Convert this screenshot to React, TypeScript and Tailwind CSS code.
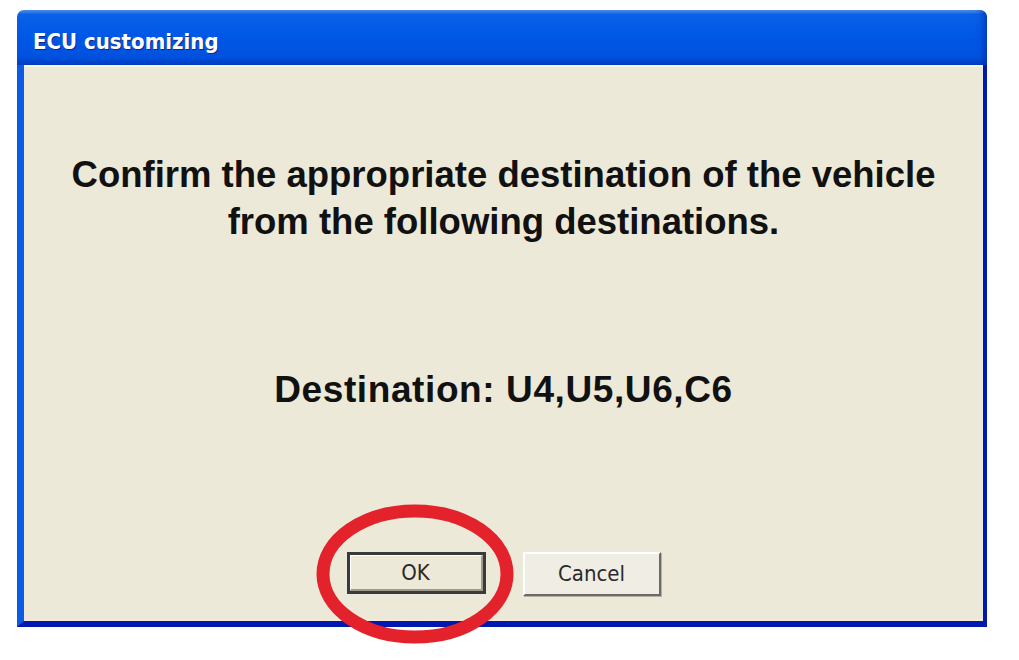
import * as React from 'react';

const titleFont = { fontFamily: '"DejaVu Sans Condensed", "DejaVu Sans", sans-serif' };
const bodyFont = { fontFamily: '"Liberation Sans", Arial, sans-serif' };

function XpButton({ label, isDefault }: { label: string; isDefault?: boolean }) {
  if (isDefault) {
    return (
      <div className="w-[139px] h-[42px] border-[3px] border-[#3a3a3a] bg-[#ece9d8]">
        <div className="h-full flex items-center justify-center border-t border-l border-t-white border-l-white border-b-2 border-r-2 border-b-[#9d9a8e] border-r-[#9d9a8e]">
          <span className="text-[22px] text-[#2a2a2a] leading-none" style={titleFont}>
            {label}
          </span>
        </div>
      </div>
    );
  }
  return (
    <div className="w-[138px] h-[44px] flex items-center justify-center bg-[#f0eee4] border-2 border-t-white border-l-white border-b-[#6b6a65] border-r-[#6b6a65] shadow-[1px_1px_0_#b5b2a5]">
      <span className="text-[22px] text-[#2a2a2a] leading-none" style={titleFont}>
        {label}
      </span>
    </div>
  );
}

export default function App() {
  return (
    <div className="w-[1019px] h-[660px] bg-white overflow-hidden">
      <div className="relative ml-[17px] mt-[10px] w-[970px] flex flex-col">
        {/* title bar */}
        <div className="h-[55px] rounded-t-[7px] flex items-center pl-[16px] pt-[8px] bg-[linear-gradient(to_bottom,#5a9cf5_0%,#0b61e6_8%,#0058e6_45%,#0052df_85%,#003fc4_100%)] shadow-[inset_-6px_0_8px_-4px_#0030b0]">
          <span
            className="text-white font-bold text-[22px] leading-none [text-shadow:1px_1px_0_#0a2a8a]"
            style={titleFont}
          >
            ECU customizing
          </span>
        </div>

        {/* frame + client */}
        <div className="border-l-[7px] border-l-[#0a5ce4] border-r-[4px] border-r-[#0019b0] border-b-[6px] border-b-[#0019b0]">
          <div className="h-[556px] bg-[#ece9d8] flex flex-col items-center border-t-2 border-t-[#f7f5ec] border-b-2 border-b-[#f6e9d8]">
            <div
              className="mt-[84px] text-center font-bold text-[36.5px] leading-[47px] text-[#111]"
              style={bodyFont}
            >
              <div>Confirm the appropriate destination of the vehicle</div>
              <div>from the following destinations.</div>
            </div>

            <div
              className="mt-[121px] text-center font-bold text-[37px] leading-[47px] tracking-[0.6px] text-[#111]"
              style={bodyFont}
            >
              Destination: U4,U5,U6,C6
            </div>

            <div className="mt-[139px] flex items-start gap-[37px]">
              <XpButton label="OK" isDefault />
              <XpButton label="Cancel" />
            </div>
          </div>
        </div>

        {/* red annotation ellipse */}
        <svg
          className="absolute left-[298px] top-[493px] pointer-events-none"
          width="202"
          height="142"
          viewBox="0 0 202 142"
        >
          <ellipse cx="100" cy="71" rx="92" ry="63" fill="none" stroke="#e3222b" strokeWidth="13" />
        </svg>
      </div>
    </div>
  );
}
